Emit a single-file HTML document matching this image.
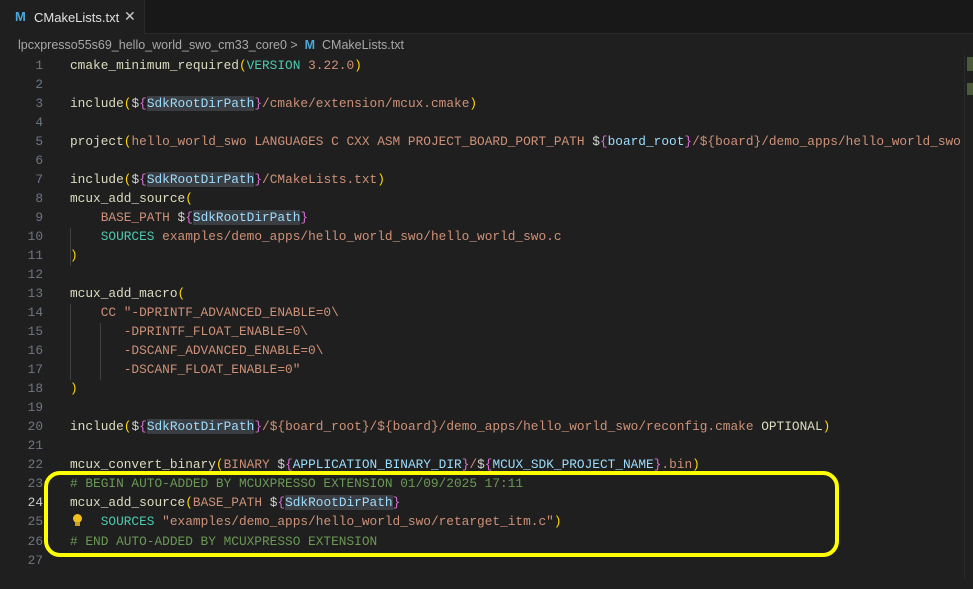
<!DOCTYPE html>
<html><head><meta charset="utf-8"><style>
body{margin:0;width:973px;height:579px;background:#1f1f1f;overflow:hidden;position:relative;font-family:"Liberation Sans",sans-serif}
.tabbar{position:absolute;left:0;top:0;width:973px;height:33px;background:#181818;border-bottom:1px solid #2b2b2b}
.tab{position:absolute;left:0;top:0;width:144px;height:34px;background:#1f1f1f;border-right:1px solid #2b2b2b;color:#e0e0e0;font-size:13px}
.tab .m{position:absolute;left:15px;top:9px;color:#4aa8d8;font-weight:bold;font-size:13px}
.tab .t{position:absolute;left:34px;top:10px}
.tab .x{position:absolute;left:124px;top:8px;font-size:14px;color:#ccc}
.bc{position:absolute;left:18px;top:38px;font-size:12.5px;color:#a8a8a8;white-space:nowrap}
.bc .m{color:#4aa8d8;font-weight:bold}
.code{position:absolute;left:0;top:55.5px;font-family:"Liberation Mono",monospace;font-size:12.8px;line-height:19.04px;white-space:pre}
.ln{position:absolute;left:0;width:43px;text-align:right;color:#6e7681}
.tx{position:absolute;left:70px;color:#d4d4d4}
.f{color:#dcdcc0}.p{color:#ffd700}.b{color:#da70d6}.k{color:#4ec9b0}.s{color:#ce9178}.v{color:#9cdcfe}.c{color:#6a9955}.w{color:#d4d4d4}
.h{background:#3a3d41}
.g{position:absolute;width:1px;background:#404040}
.box{position:absolute;left:44px;top:471px;width:787px;height:78px;border:4px solid #ffff00;border-radius:16px}
.mm{position:absolute;left:964px;top:55px;width:9px;height:524px;background:#1f1f1f;border-left:1px solid #2b2b2b}
</style></head><body>
<div class="tabbar"><div class="tab"><span class="m">M</span><span class="t">CMakeLists.txt</span><span class="x">✕</span></div></div>
<div class="bc">lpcxpresso55s69_hello_world_swo_cm33_core0 &gt; &nbsp;<span class="m">M</span>&nbsp; CMakeLists.txt</div>
<div class="mm"><div style="position:absolute;left:2px;top:2px;width:6px;height:14px;background:#4a5a3a"></div><div style="position:absolute;left:2px;top:28px;width:6px;height:12px;background:#4a5a3a"></div></div>
<div class="g" style="left:70px;top:228px;height:38px"></div>
<div class="g" style="left:70px;top:304px;height:76px"></div>
<div class="g" style="left:100px;top:323px;height:57px"></div>
<div class="code">
<div class="ln" style="top:0">1</div><div class="tx" style="top:0"><span class="f">cmake_minimum_required</span><span class="p">(</span><span class="k">VERSION</span> <span class="s">3.22.0</span><span class="p">)</span></div>
<div class="ln" style="top:19.04px">2</div>
<div class="ln" style="top:38.08px">3</div><div class="tx" style="top:38.08px"><span class="f">include</span><span class="p">(</span>$<span class="b">{</span><span class="v h">SdkRootDirPath</span><span class="b">}</span><span class="s">/cmake/extension/mcux.cmake</span><span class="p">)</span></div>
<div class="ln" style="top:57.12px">4</div>
<div class="ln" style="top:76.16px">5</div><div class="tx" style="top:76.16px"><span class="f">project</span><span class="p">(</span><span class="s">hello_world_swo LANGUAGES C CXX ASM PROJECT_BOARD_PORT_PATH </span>$<span class="b">{</span><span class="v">board_root</span><span class="b">}</span><span class="s">/${board}/demo_apps/hello_world_swo</span></div>
<div class="ln" style="top:95.2px">6</div>
<div class="ln" style="top:114.24px">7</div><div class="tx" style="top:114.24px"><span class="f">include</span><span class="p">(</span>$<span class="b">{</span><span class="v h">SdkRootDirPath</span><span class="b">}</span><span class="s">/CMakeLists.txt</span><span class="p">)</span></div>
<div class="ln" style="top:133.28px">8</div><div class="tx" style="top:133.28px"><span class="f">mcux_add_source</span><span class="p">(</span></div>
<div class="ln" style="top:152.32px">9</div><div class="tx" style="top:152.32px">    <span class="s">BASE_PATH </span>$<span class="b">{</span><span class="v h">SdkRootDirPath</span><span class="b">}</span></div>
<div class="ln" style="top:171.36px">10</div><div class="tx" style="top:171.36px">    <span class="k">SOURCES</span> <span class="s">examples/demo_apps/hello_world_swo/hello_world_swo.c</span></div>
<div class="ln" style="top:190.4px">11</div><div class="tx" style="top:190.4px"><span class="p">)</span></div>
<div class="ln" style="top:209.44px">12</div>
<div class="ln" style="top:228.48px">13</div><div class="tx" style="top:228.48px"><span class="f">mcux_add_macro</span><span class="p">(</span></div>
<div class="ln" style="top:247.52px">14</div><div class="tx" style="top:247.52px">    <span class="s">CC "-DPRINTF_ADVANCED_ENABLE=0\</span></div>
<div class="ln" style="top:266.56px">15</div><div class="tx" style="top:266.56px"><span class="s">       -DPRINTF_FLOAT_ENABLE=0\</span></div>
<div class="ln" style="top:285.6px">16</div><div class="tx" style="top:285.6px"><span class="s">       -DSCANF_ADVANCED_ENABLE=0\</span></div>
<div class="ln" style="top:304.64px">17</div><div class="tx" style="top:304.64px"><span class="s">       -DSCANF_FLOAT_ENABLE=0"</span></div>
<div class="ln" style="top:323.68px">18</div><div class="tx" style="top:323.68px"><span class="p">)</span></div>
<div class="ln" style="top:342.72px">19</div>
<div class="ln" style="top:361.76px">20</div><div class="tx" style="top:361.76px"><span class="f">include</span><span class="p">(</span>$<span class="b">{</span><span class="v h">SdkRootDirPath</span><span class="b">}</span><span class="s">/${board_root}/${board}/demo_apps/hello_world_swo/reconfig.cmake </span><span class="f">OPTIONAL</span><span class="p">)</span></div>
<div class="ln" style="top:380.8px">21</div>
<div class="ln" style="top:399.84px">22</div><div class="tx" style="top:399.84px"><span class="f">mcux_convert_binary</span><span class="p">(</span><span class="s">BINARY </span>$<span class="b">{</span><span class="v">APPLICATION_BINARY_DIR</span><span class="b">}</span><span class="s">/</span>$<span class="b">{</span><span class="v">MCUX_SDK_PROJECT_NAME</span><span class="b">}</span><span class="s">.bin</span><span class="p">)</span></div>
<div class="ln" style="top:418.88px">23</div><div class="tx" style="top:418.88px"><span class="c"># BEGIN AUTO-ADDED BY MCUXPRESSO EXTENSION 01/09/2025 17:11</span></div>
<div class="ln" style="top:437.92px;color:#ccc">24</div><div class="tx" style="top:437.92px"><span class="f">mcux_add_source</span><span class="p">(</span><span class="s">BASE_PATH </span>$<span class="b">{</span><span class="v h">SdkRootDirPath</span><span class="b">}</span></div>
<div class="ln" style="top:456.96px">25</div><div class="tx" style="top:456.96px">    <span class="k">SOURCES</span> <span class="s">"examples/demo_apps/hello_world_swo/retarget_itm.c"</span><span class="p">)</span></div>
<div class="ln" style="top:476px">26</div><div class="tx" style="top:476px"><span class="c"># END AUTO-ADDED BY MCUXPRESSO EXTENSION</span></div>
<div class="ln" style="top:495.04px">27</div>
</div>
<div style="position:absolute;left:73px;top:514px;width:9px;height:9px;border-radius:50%;background:#f0c020"></div>
<div style="position:absolute;left:75px;top:522px;width:5px;height:4px;background:#c8a020"></div>
<div class="box"></div>
</body></html>
